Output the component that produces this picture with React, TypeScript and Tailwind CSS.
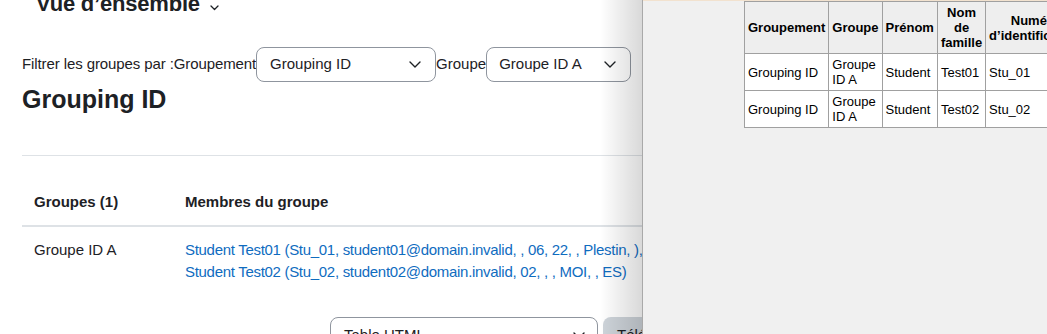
function Chevron({ className }: { className?: string }) {
  return (
    <svg className={className} width="12" height="7" viewBox="0 0 12 7" fill="none">
      <path d="M1 1l5 5 5-5" stroke="#1d2125" strokeWidth="1.4" strokeLinecap="round" strokeLinejoin="round" />
    </svg>
  );
}

export default function App() {
  const th = "border border-[#a0a0a0] px-[3px] py-[3px] font-bold text-center align-middle";
  const td = "border border-[#a0a0a0] px-[3px] py-[3px] text-left align-middle bg-white";
  return (
    <div className="relative w-[1047px] h-[334px] overflow-hidden bg-white text-[#1d2125] font-['Liberation_Sans',Arial,sans-serif]">
      <div className="pl-[22px]">
        <div className="mt-[-9px] pl-[14px] flex items-start">
          <h2 className="text-[22px] leading-[26px] font-bold tracking-[-0.2px]">Vue d’ensemble</h2>
          <svg className="ml-[10px] mt-[14px]" width="9" height="6" viewBox="0 0 9 6" fill="none">
            <path d="M1 1l3.5 3.5L8 1" stroke="#1d2125" strokeWidth="1.3" strokeLinecap="round" strokeLinejoin="round" />
          </svg>
        </div>

        <div className="mt-[30px] flex items-center h-[35px] text-[15px]">
          <span className="tracking-[-0.1px]">Filtrer les groupes par :Groupement</span>
          <div className="flex items-center justify-between w-[180px] h-[35px] border border-[#8f959e] rounded-[8px] pl-[13px] pr-[14px] bg-white">
            <span>Grouping ID</span>
            <Chevron />
          </div>
          <span>Groupe</span>
          <div className="flex items-center justify-between w-[145px] h-[35px] border border-[#8f959e] rounded-[8px] pl-[12px] pr-[14px] bg-white">
            <span>Groupe ID A</span>
            <Chevron />
          </div>
        </div>

        <h3 className="mt-[2px] text-[25px] leading-[30px] font-bold">Grouping ID</h3>

        <div className="mt-[41px] h-px bg-[#dee2e6]" />

        <table className="mt-[23px] w-full border-collapse text-[15px] leading-[22px]">
          <thead>
            <tr>
              <th className="w-[151px] p-[12px] text-left font-bold border-b-2 border-[#dee2e6]">Groupes (1)</th>
              <th className="p-[12px] text-left font-bold border-b-2 border-[#dee2e6]">Membres du groupe</th>
            </tr>
          </thead>
          <tbody>
            <tr>
              <td className="p-[12px] align-top">Groupe ID A</td>
              <td className="p-[12px] align-top text-[#0f6cbf] whitespace-nowrap tracking-[-0.3px]">
                <span>Student Test01 (Stu_01, student01@domain.invalid, , 06, 22, , Plestin, ),</span>
                <br />
                <span>Student Test02 (Stu_02, student02@domain.invalid, 02, , , MOI, , ES)</span>
              </td>
            </tr>
          </tbody>
        </table>

        <div className="mt-[22px] flex pl-[308px] text-[15px]">
          <div className="flex items-center justify-between w-[268px] h-[36px] border border-[#8f959e] rounded-[8px] pl-[13px] pr-[12px] bg-white">
            <span>Table HTML</span>
            <Chevron />
          </div>
          <div className="ml-[5px] h-[36px] flex items-center px-[14px] rounded-[8px] bg-[#ced4da]">Télécharger</div>
        </div>
      </div>

      <div className="absolute top-0 left-[600px] w-[42px] h-full bg-linear-to-r from-black/0 to-black/15" />

      <div className="absolute top-0 left-[642px] w-[405px] h-[334px] border-l border-[#a9a9a9] bg-[#f0f0f0] overflow-hidden">
        <div className="h-px bg-[#f2e2cf]" />
        <table className="ml-[101px] w-px border-collapse border border-[#a0a0a0] text-[13px] leading-[15px] text-black font-['Liberation_Sans',Arial,sans-serif]">
          <thead>
            <tr className="bg-[#eeeeee]">
              <th className={th}>Groupement</th>
              <th className={th}>Groupe</th>
              <th className={th}>Prénom</th>
              <th className={th}>Nom de famille</th>
              <th className={th}>Numéro d’identification</th>
              <th className={th}>Adresse de courriel</th>
            </tr>
          </thead>
          <tbody>
            <tr>
              <td className={td}>Grouping ID</td>
              <td className={td}>Groupe ID A</td>
              <td className={td}>Student</td>
              <td className={td}>Test01</td>
              <td className={td}>Stu_01</td>
              <td className={td}>student01@domain.invalid</td>
            </tr>
            <tr>
              <td className={td}>Grouping ID</td>
              <td className={td}>Groupe ID A</td>
              <td className={td}>Student</td>
              <td className={td}>Test02</td>
              <td className={td}>Stu_02</td>
              <td className={td}>student02@domain.invalid</td>
            </tr>
          </tbody>
        </table>
      </div>
    </div>
  );
}
